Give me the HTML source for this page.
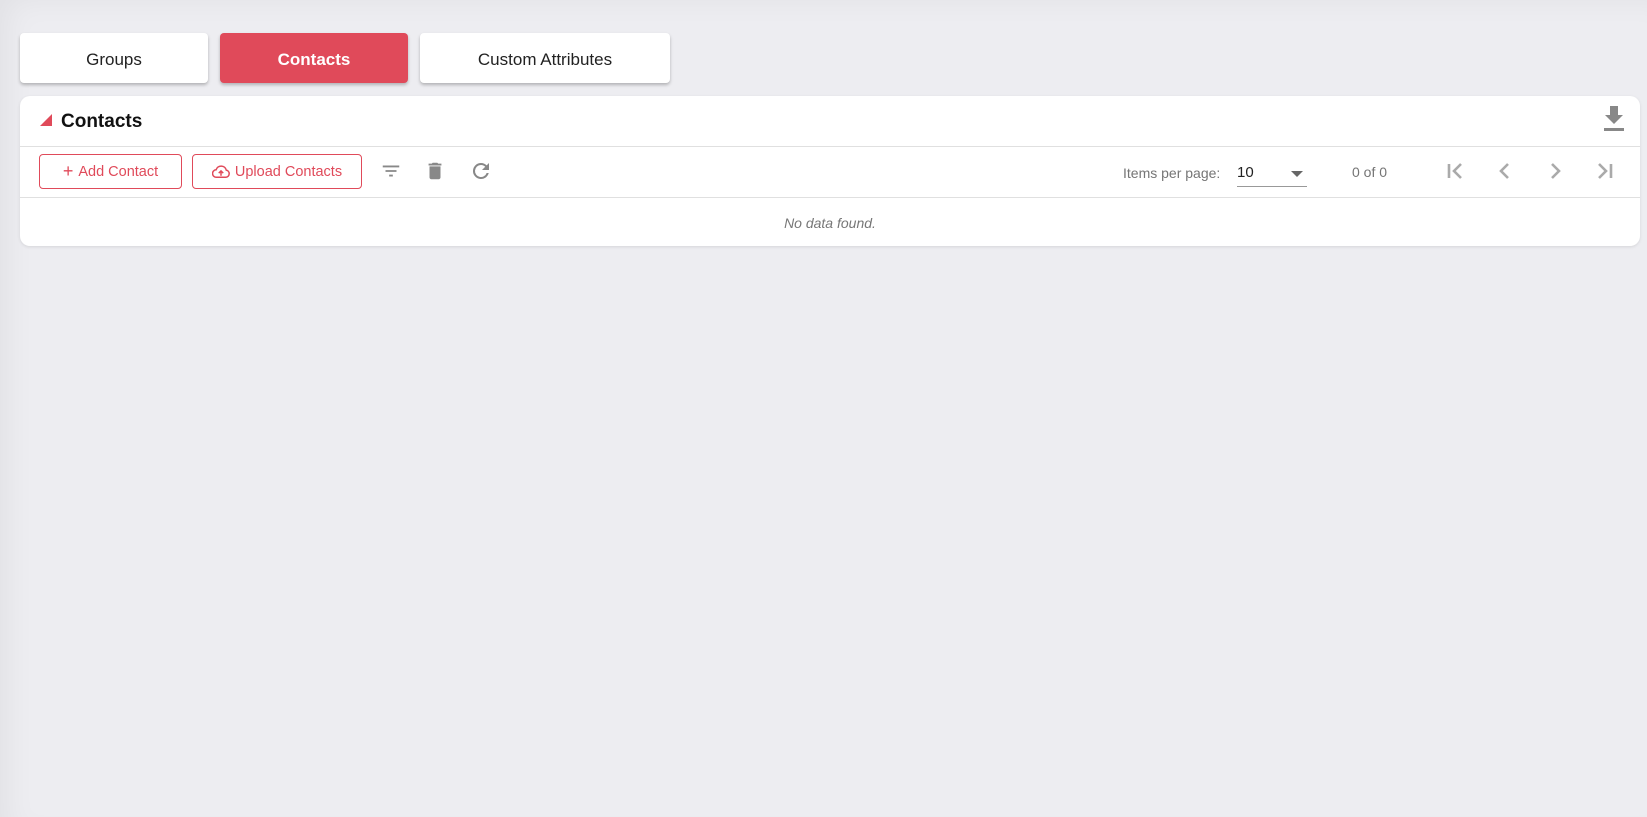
<!DOCTYPE html>
<html><head><style>
*{box-sizing:border-box;margin:0;padding:0}
body{width:1647px;height:817px;background:#ededf1;font-family:"Liberation Sans",Roboto,sans-serif;position:relative;overflow:hidden;box-shadow:inset 18px 10px 30px -10px rgba(0,0,0,0.05)}
.tab{position:absolute;top:33px;height:50px;padding-top:4px;background:#fff;border-radius:4px;box-shadow:0 2px 3px rgba(0,0,0,.25);display:flex;align-items:center;justify-content:center;font-size:17px;color:#222}
.tab.a{background:#e04a5a;color:#fff;font-weight:bold}
.card{position:absolute;left:20px;top:96px;width:1620px;height:150px;background:#fff;border-radius:10px;box-shadow:0 1px 3px rgba(0,0,0,.1)}
.line{position:absolute;left:0;right:0;height:1px;background:#e0e0e0}
.btn{position:absolute;top:58px;height:35px;border:1px solid #e04a5a;border-radius:4px;color:#e04a5a;font-size:14.5px;display:flex;align-items:center;justify-content:center;gap:5px}
.t{position:absolute;font-size:14px;color:#757575}
svg{position:absolute}
</style></head><body>
<div class="tab" style="left:20px;width:188px">Groups</div>
<div class="tab a" style="left:220px;width:188px">Contacts</div>
<div class="tab" style="left:420px;width:250px">Custom Attributes</div>
<div class="card">
 <div style="position:absolute;left:20px;top:18px;width:0;height:0;border-left:12px solid transparent;border-bottom:12px solid #e04a5a"></div>
 <div style="position:absolute;left:41px;top:15px;font-size:19px;font-weight:bold;color:#111">Contacts</div>
 <svg style="left:1582px;top:10px" width="24" height="26" viewBox="0 0 24 26"><path d="M8 0h8v9h5l-9 9-9-9h5z" fill="#888"/><rect x="2" y="22" width="20" height="3" fill="#888"/></svg>
 <div class="line" style="top:50px"></div>
 <div class="btn" style="left:19px;width:143px"><span style="font-size:18px">+</span> Add Contact</div>
 <div class="btn" style="left:172px;width:170px"><svg style="position:static" width="18" height="14" viewBox="0 0 24 18"><path d="M6 16a5 5 0 0 1-.5-10A7 7 0 0 1 19 6.5 4.8 4.8 0 0 1 18.5 16z" fill="none" stroke="#e04a5a" stroke-width="2"/><path d="M12 14V8M9 10.5l3-3 3 3" fill="none" stroke="#e04a5a" stroke-width="2"/></svg>Upload Contacts</div>
 <svg style="left:360px;top:64px" width="22" height="22" viewBox="0 0 24 24"><path d="M3 6h18v2H3zm3 5h12v2H6zm4 5h4v2h-4z" fill="#888"/></svg>
 <svg style="left:404px;top:63px" width="22" height="24" viewBox="0 0 24 24"><path d="M6 19c0 1.1.9 2 2 2h8c1.1 0 2-.9 2-2V7H6zM19 4h-3.5l-1-1h-5l-1 1H5v2h14z" fill="#888"/></svg>
 <svg style="left:449px;top:63px" width="24" height="24" viewBox="0 0 24 24"><path d="M17.65 6.35A7.96 7.96 0 0 0 12 4a8 8 0 1 0 7.73 10h-2.08A6 6 0 1 1 12 6c1.66 0 3.14.69 4.22 1.78L13 11h7V4z" fill="#888"/></svg>
 <div class="t" style="left:1103px;top:69px">Items per page:</div>
 <div style="position:absolute;left:1217px;top:68px;font-size:15px;color:#222">10</div>
 <div style="position:absolute;left:1217px;top:90px;width:70px;height:1px;background:#999"></div>
 <div style="position:absolute;left:1271px;top:75px;border-left:6px solid transparent;border-right:6px solid transparent;border-top:6px solid #666"></div>
 <div class="t" style="left:1332px;top:68px">0 of 0</div>
 <svg style="left:1423px;top:63px" width="24" height="24" viewBox="0 0 24 24"><path d="M6 5v14M18 5l-7 7 7 7" fill="none" stroke="#aaa" stroke-width="2.6"/></svg>
 <svg style="left:1473px;top:63px" width="24" height="24" viewBox="0 0 24 24"><path d="M15 5l-7 7 7 7" fill="none" stroke="#aaa" stroke-width="2.6"/></svg>
 <svg style="left:1523px;top:63px" width="24" height="24" viewBox="0 0 24 24"><path d="M9 5l7 7-7 7" fill="none" stroke="#aaa" stroke-width="2.6"/></svg>
 <svg style="left:1573px;top:63px" width="24" height="24" viewBox="0 0 24 24"><path d="M18 5v14M6 5l7 7-7 7" fill="none" stroke="#aaa" stroke-width="2.6"/></svg>
 <div class="line" style="top:101px"></div>
 <div style="position:absolute;left:0;right:0;top:119px;text-align:center;font-size:14px;font-style:italic;color:#777">No data found.</div>
</div>
</body></html>
